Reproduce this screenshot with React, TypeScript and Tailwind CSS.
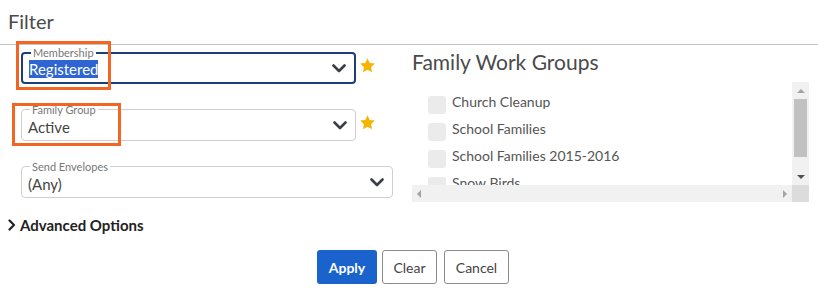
import React from "react";

const Chevron = ({ className = "" }: { className?: string }) => (
  <svg width="14" height="9" viewBox="0 0 14 9" className={className}>
    <path d="M1.5 1.5 L7 7 L12.5 1.5" fill="none" stroke="#3a3f47" strokeWidth="2.6" strokeLinecap="round" strokeLinejoin="round" />
  </svg>
);

const Star = () => (
  <svg width="17" height="17" viewBox="0 0 24 24">
    <path d="M12 1.8l3.1 6.6 7.2.9-5.3 5 1.4 7.1L12 17.9l-6.4 3.5 1.4-7.1-5.3-5 7.2-.9z" fill="#f5b400" />
  </svg>
);

function Select({
  label,
  value,
  width,
  focused = false,
  highlighted = false,
}: {
  label: string;
  value: string;
  width: string;
  focused?: boolean;
  highlighted?: boolean;
}) {
  return (
    <fieldset
      className={`${width} h-[37px] rounded-[4px] pl-[6px] pr-[8px] flex items-center justify-between ${
        focused ? "border-2 border-[#1c3f7a]" : "border border-[#cfcfcf]"
      }`}
    >
      <legend className="ml-[2px] px-[2px] text-[11px] leading-[11px] text-[#777]">{label}</legend>
      <span
        className={`text-[15px] leading-[18px] -mt-[2px] ${
          highlighted ? "bg-[#2f65d3] text-white" : "text-[#444]"
        }`}
      >
        {value}
      </span>
      <Chevron className="-mt-[4px]" />
    </fieldset>
  );
}

const groups = ["Church Cleanup", "School Families", "School Families 2015-2016", "Snow Birds"];

export default function App() {
  return (
    <div
      className="relative w-[818px] h-[293px] bg-white overflow-hidden"
      style={{ fontFamily: "Lato, 'Open Sans', sans-serif" }}
    >
      <div className="h-[45px] border-b border-[#c4c4c4] pl-[8px] pt-[8px] text-[20px] leading-[26px] text-[#4a4a4a]">
        Filter
      </div>

      <div className="flex">
        {/* left column */}
        <div className="w-[412px] pl-[21px] pt-[2px] flex flex-col gap-[20px]">
          <div className="flex items-center gap-[3px]">
            <Select label="Membership" value="Registered" width="w-[335px]" focused highlighted />
            <Star />
          </div>
          <div className="flex items-center gap-[3px]">
            <Select label="Family Group" value="Active" width="w-[335px]" />
            <Star />
          </div>
          <div className="flex items-center">
            <Select label="Send Envelopes" value="(Any)" width="w-[372px]" />
          </div>
        </div>

        {/* right column */}
        <div className="w-[397px] pt-[3px]">
          <div className="text-[21px] leading-[27px] text-[#4a4a4a]">Family Work Groups</div>
          <div className="mt-[7px] h-[120px] flex flex-col">
            <div className="flex h-[103px]">
              <div className="flex-1 overflow-hidden pl-[16px] pt-[14px] flex flex-col gap-[9px]">
                {groups.map((g) => (
                  <div key={g} className="flex items-center gap-[6px] h-[18px] shrink-0">
                    <div className="w-[18px] h-[18px] rounded-[3px] bg-[#ebebeb]" />
                    <span className="text-[14px] leading-[18px] -mt-[6px] text-[#555] whitespace-nowrap">{g}</span>
                  </div>
                ))}
              </div>
              <div className="w-[17px] bg-[#f1f1f1] flex flex-col items-center">
                <div className="h-[17px] flex items-center justify-center">
                  <div className="w-0 h-0 border-l-[4px] border-r-[4px] border-b-[4px] border-l-transparent border-r-transparent border-b-[#a3a3a3]" />
                </div>
                <div className="w-[13px] h-[58px] bg-[#c1c1c1]" />
                <div className="flex-1" />
                <div className="h-[17px] flex items-center justify-center">
                  <div className="w-0 h-0 border-l-[4px] border-r-[4px] border-t-[4px] border-l-transparent border-r-transparent border-t-[#505050]" />
                </div>
              </div>
            </div>
            <div className="flex h-[17px]">
              <div className="flex-1 bg-[#f1f1f1] flex items-center justify-between px-[5px]">
                <div className="w-0 h-0 border-t-[4px] border-b-[4px] border-r-[4px] border-t-transparent border-b-transparent border-r-[#a3a3a3]" />
                <div className="w-0 h-0 border-t-[4px] border-b-[4px] border-l-[4px] border-t-transparent border-b-transparent border-l-[#a3a3a3]" />
              </div>
              <div className="w-[17px] bg-[#dcdcdc]" />
            </div>
          </div>
        </div>
      </div>

      <div className="mt-[14px] pl-[8px] flex items-center gap-[4px] h-[18px]">
        <svg width="8" height="12" viewBox="0 0 8 12">
          <path d="M1.5 1.5 L6 6 L1.5 10.5" fill="none" stroke="#222" strokeWidth="2.2" strokeLinecap="round" strokeLinejoin="round" />
        </svg>
        <span className="text-[15px] font-bold text-[#222]">Advanced Options</span>
      </div>

      <div className="mt-[16px] flex justify-center gap-[5px] pl-[8px]">
        <button className="w-[60px] h-[34px] rounded-[3px] bg-[#1a63cc] text-white text-[14px] font-bold">Apply</button>
        <button className="w-[55px] h-[34px] rounded-[3px] border border-[#8a8a8a] bg-white text-[#444] text-[14px]">Clear</button>
        <button className="ml-[2px] w-[65px] h-[34px] rounded-[3px] border border-[#8a8a8a] bg-white text-[#444] text-[14px]">Cancel</button>
      </div>

      {/* annotation boxes */}
      <div className="absolute left-[16px] top-[41px] w-[95px] h-[49px] border-[3px] border-[#f26522]" />
      <div className="absolute left-[12px] top-[103px] w-[109px] h-[43px] border-[3px] border-[#f26522]" />
    </div>
  );
}
